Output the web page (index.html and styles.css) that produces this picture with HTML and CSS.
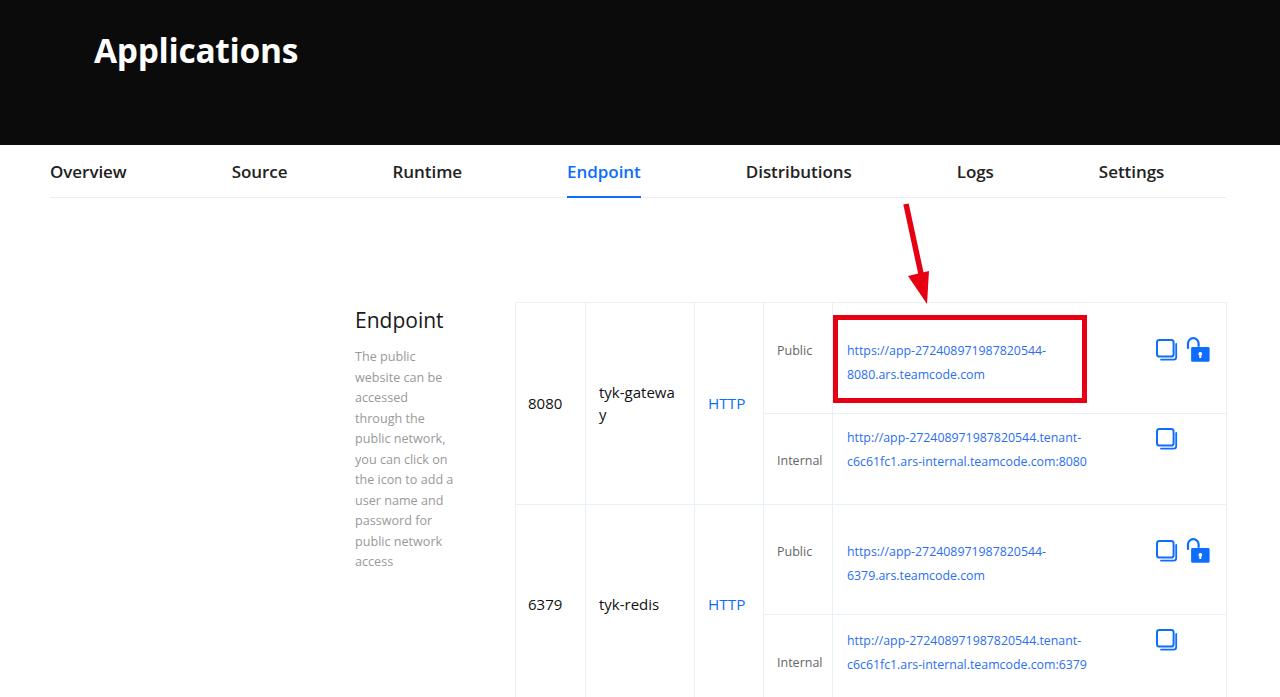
FILE: index.html
```html
<!DOCTYPE html>
<html lang="en">
<head>
  <meta charset="UTF-8">
  <meta name="viewport" content="width=device-width, initial-scale=1.0">
  <title>Applications</title>
  <link rel="stylesheet" href="styles.css">
</head>
<body>
  <svg width="0" height="0" class="defs">
    <symbol id="copy" viewBox="0 0 22 22">
      <path d="M5 20.6h12.6a2.6 2.6 0 0 0 2.6-2.600V5" fill="none" stroke="currentColor" stroke-width="1.8" stroke-linecap="round"/>
      <rect x="1" y="1" width="16.6" height="16.6" rx="2.4" fill="#fff" stroke="currentColor" stroke-width="2"/>
    </symbol>
    <symbol id="unlock" viewBox="0 0 24 25">
      <path d="M2 11V6.5a5.3 5.3 0 0 1 10.6 0V9" fill="none" stroke="currentColor" stroke-width="2.2" stroke-linecap="round"/>
      <path fill="currentColor" fill-rule="evenodd" d="M6.5 10h15.7a1.4 1.4 0 0 1 1.4 1.4v12a1.4 1.4 0 0 1-1.4 1.4H6.5a1.4 1.4 0 0 1-1.4-1.4v-12A1.4 1.4 0 0 1 6.5 10zm7.8 5a1.9 1.9 0 0 0-1 3.5V21h2v-2.500a1.9 1.900 0 0 0-1-3.500z"/>
    </symbol>
  </svg>

  <div class="page">
    <header class="top">
      <h1>Applications</h1>
    </header>

    <nav class="tabs">
      <a href="#">Overview</a>
      <a href="#">Source</a>
      <a href="#">Runtime</a>
      <a href="#" class="active">Endpoint</a>
      <a href="#">Distributions</a>
      <a href="#">Logs</a>
      <a href="#">Settings</a>
    </nav>

    <section class="content">
      <div class="intro">
        <h2>Endpoint</h2>
        <p>The public website can be accessed through the public network, you can click on the icon to add a user name and password for public network access</p>
      </div>

      <table class="endpoints">
        <colgroup>
          <col class="c-port"><col class="c-name"><col class="c-proto"><col class="c-kind"><col>
        </colgroup>
        <tr class="row-public">
          <td rowspan="2" class="port">8080</td>
          <td rowspan="2" class="name">tyk-gateway</td>
          <td rowspan="2" class="proto">HTTP</td>
          <td class="kind">Public</td>
          <td class="url">
            <div class="url-cell">
              <a href="#">https://app-272408971987820544-8080.ars.teamcode.com</a>
              <span class="actions">
                <svg class="ico-copy"><use href="#copy"/></svg>
                <svg class="ico-lock"><use href="#unlock"/></svg>
              </span>
            </div>
          </td>
        </tr>
        <tr class="row-internal">
          <td class="kind">Internal</td>
          <td class="url">
            <div class="url-cell">
              <a href="#">http://app-272408971987820544.tenant-c6c61fc1.ars-internal.teamcode.com:8080</a>
              <span class="actions">
                <svg class="ico-copy"><use href="#copy"/></svg>
              </span>
            </div>
          </td>
        </tr>
        <tr class="row-public second">
          <td rowspan="2" class="port">6379</td>
          <td rowspan="2" class="name">tyk-redis</td>
          <td rowspan="2" class="proto">HTTP</td>
          <td class="kind">Public</td>
          <td class="url">
            <div class="url-cell">
              <a href="#">https://app-272408971987820544-6379.ars.teamcode.com</a>
              <span class="actions">
                <svg class="ico-copy"><use href="#copy"/></svg>
                <svg class="ico-lock"><use href="#unlock"/></svg>
              </span>
            </div>
          </td>
        </tr>
        <tr class="row-internal second">
          <td class="kind">Internal</td>
          <td class="url">
            <div class="url-cell">
              <a href="#">http://app-272408971987820544.tenant-c6c61fc1.ars-internal.teamcode.com:6379</a>
              <span class="actions">
                <svg class="ico-copy"><use href="#copy"/></svg>
              </span>
            </div>
          </td>
        </tr>
      </table>
    </section>

    <!-- annotation drawn on top of the screenshot -->
    <div class="mark-box"></div>
    <svg class="mark-arrow" width="40" height="110" viewBox="0 0 40 110">
      <path d="M3 3 L20 82" stroke="#e60012" stroke-width="5.500" fill="none"/>
      <path d="M5 75 L26 70 L24 103 Z" fill="#e60012"/>
    </svg>
  </div>
</body>
</html>
```

FILE: styles.css
```css
* {
  box-sizing: border-box;
}
html, body {
  margin: 0;
  padding: 0;
}
body {
  font-family: "Open Sans", "Noto Sans", Arial, sans-serif;
  background-color: #fff;
  color: #1a1a1a;
}
a {
  text-decoration: none;
}
.defs {
  position: absolute;
}
.page {
  position: relative;
  height: 697px;
  overflow: hidden;
}

.top {
  height: 145px;
  background-color: #0b0b0b;
  padding: 28px 0 0 94px;
}
.top h1 {
  margin: 0;
  color: #fff;
  font-size: 33.500px;
  line-height: 44px;
  font-weight: 700;
  letter-spacing: -0.3px;
}

.tabs {
  display: flex;
  gap: 105px;
  margin: 0 54px 0 50px;
  height: 53px;
  border-bottom: 1px solid #eceef0;
}
.tabs a {
  height: 53px;
  padding-top: 14px;
  line-height: 26px;
  font-size: 17px;
  font-weight: 600;
  color: #222;
  letter-spacing: -0.05px;
}
.tabs a.active {
  color: #0d6efd;
  border-bottom: 2px solid #0d6efd;
}

.content {
  display: flex;
  padding: 105px 53px 0 355px;
}
.intro {
  width: 160px;
  flex-shrink: 0;
}
.intro h2 {
  margin: 0;
  padding-top: 2px;
  font-size: 21px;
  line-height: 30px;
  font-weight: 400;
  color: #1a1a1a;
}
.intro p {
  width: 100px;
  margin: 12px 0 0;
  font-size: 12.6px;
  line-height: 20.5px;
  color: #999;
}

.endpoints {
  width: 712px;
  margin-top: -1px;
  table-layout: fixed;
  border-collapse: collapse;
  font-size: 14px;
}
.endpoints td {
  border: 1px solid #e8f0f8;
  padding: 0 13px;
}
.c-port { width: 70px; }
.c-name { width: 109px; }
.c-proto { width: 69px; }
.c-kind { width: 69px; }
.row-public { height: 111px; }
.row-public.second { height: 110px; }
.row-internal { height: 91px; }

.endpoints .port, .endpoints .name, .endpoints .proto {
  padding-bottom: 2px;
}
.endpoints .port {
  padding-left: 12px;
}
.port, .name {
  color: #111;
  font-size: 15px;
  line-height: 22px;
  word-break: break-all;
}
.proto {
  color: #0d6efd;
  font-size: 15.300px;
}
.kind {
  color: #666;
  font-size: 12.5px;
  padding-right: 0 !important;
  vertical-align: top;
}
.row-public .kind {
  padding-top: 39px;
}
.row-public.second .kind {
  padding-top: 38px;
}
.row-internal .kind {
  padding-top: 38px;
}
.row-internal.second .kind {
  padding-top: 39px;
}
.endpoints .url {
  vertical-align: top;
  padding-left: 14px;
}
.url-cell {
  display: flex;
  justify-content: space-between;
}
.row-public .url-cell {
  padding-top: 36px;
}
.row-public.second .url-cell {
  padding-top: 35px;
}
.row-internal .url-cell {
  padding-top: 12px;
}
.row-internal.second .url-cell {
  padding-top: 14px;
}
.url-cell a {
  width: 250px;
  font-size: 12.35px;
  line-height: 24px;
  color: #2a6ef0;
  word-break: break-word;
}
.actions {
  display: flex;
  align-items: flex-start;
  gap: 8px;
  width: 56px;
  flex-shrink: 0;
  color: #0d6efd;
  margin-right: 1px;
}
.row-public .actions, .row-internal.second .actions {
  margin-top: -2px;
}
.ico-copy {
  width: 22px;
  height: 22px;
  margin-top: 2px;
}
.ico-lock {
  width: 24px;
  height: 25px;
}

.mark-box {
  position: absolute;
  left: 833px;
  top: 315px;
  width: 254px;
  height: 88px;
  border: 5px solid #e60012;
}
.mark-arrow {
  position: absolute;
  left: 903px;
  top: 201px;
}
```
